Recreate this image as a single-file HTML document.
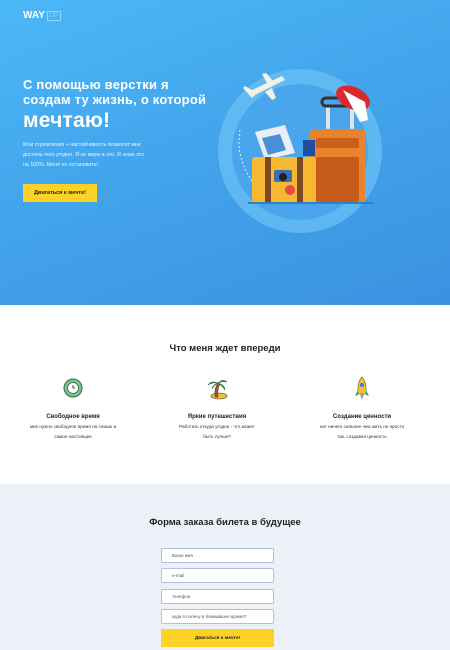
<!DOCTYPE html>
<html><head><meta charset="utf-8"><style>
*{margin:0;padding:0;box-sizing:border-box}
body{width:450px;height:650px;overflow:hidden;font-family:"Liberation Sans","DejaVu Sans",sans-serif;background:#fff;position:relative}
.hero{position:absolute;left:0;top:0;width:450px;height:305px;background:linear-gradient(160deg,#4bb8f7 0%,#42a3ea 50%,#3a92e0 100%)}
.logo{position:absolute;left:23px;top:10px;color:#fff;font-weight:bold;font-size:10px}
.logo span{display:inline-block;border:1px solid #9bd3fa;color:#9bd3fa;font-size:6px;padding:1px 2px;margin-left:2px;vertical-align:1px;font-weight:normal}
h1{position:absolute;left:23px;top:77px;color:#fff;font-size:13px;line-height:15px;font-weight:bold;white-space:nowrap;letter-spacing:.2px}
h1 b{font-size:21px;line-height:28px}
.p{position:absolute;left:23px;top:140px;color:#e8f5ff;font-size:5.3px;line-height:10px;white-space:nowrap}
.btn{position:absolute;background:#fdd226;color:#222;font-weight:bold;font-size:5.5px;display:flex;align-items:center;justify-content:center}
.circle{position:absolute;left:218px;top:69px;width:164px;height:164px;border-radius:50%;background:#6ac0f4;opacity:.75}
.circle2{position:absolute;left:232px;top:84px;width:136px;height:136px;border-radius:50%;background:#4aa6ec}
h2{position:absolute;width:450px;text-align:center;font-size:9.5px;color:#222;font-weight:bold}
.col{position:absolute;width:140px;text-align:center;top:412px;font-size:4.6px;line-height:10px;color:#333;white-space:nowrap}
.col b{display:block;font-size:6px;color:#222}
.s3{position:absolute;left:0;top:484px;width:450px;height:166px;background:#ebf1f7}
.in{position:absolute;left:161px;width:113px;height:15px;background:#fff;border:1px solid #b8bdd6;border-radius:2px;font-size:4.5px;color:#555;padding-left:10px;line-height:13px}
</style></head><body>
<div class="hero">
<div class="logo">WAY<span>UP</span></div>
<h1>С помощью верстки я<br>создам ту жизнь, о которой<br><b>мечтаю!</b></h1>
<div class="p">Мои стремления + настойчивость позволят мне<br>достичь чего угодно. Я не верю в это. Я знаю это<br>на 100%. Меня не остановить!</div>
<div class="btn" style="left:23px;top:184px;width:74px;height:18px">Двигаться к мечте!</div>
<div class="circle"></div><div class="circle2"></div>
<svg style="position:absolute;left:210px;top:60px" width="180" height="180" viewBox="0 0 180 180">
<path d="M30 70 Q25 100 45 125" stroke="#fff" stroke-dasharray="2 2" fill="none" stroke-width=".8"/>
<path d="M45 35 L75 20 L72 16 L42 30 L35 26 L33 28 L42 38 Z" fill="#f3f0e4"/>
<path d="M58 25 L52 14 L56 13 L64 22 Z M55 32 L62 40 L66 38 L62 28Z" fill="#f3f0e4"/>
<rect x="116" y="45" width="4" height="26" fill="#dfe4ea"/><rect x="140" y="45" width="4" height="26" fill="#dfe4ea"/>
<rect x="112" y="38" width="34" height="8" rx="4" fill="none" stroke="#333" stroke-width="3"/>
<rect x="100" y="69" width="55" height="75" rx="4" fill="#e8832e"/>
<rect x="106" y="78" width="43" height="10" rx="2" fill="#c9601e"/>
<rect x="106" y="97" width="43" height="45" rx="2" fill="#c55c1a"/>
<ellipse cx="143" cy="38" rx="18" ry="11" fill="#d92b2b" transform="rotate(25 143 38)"/>
<path d="M133 30 L155 42 L158 60 L150 62 Z" fill="#fff"/>
<path d="M45 72 L75 65 L85 93 L55 100 Z" fill="#e9eef5"/><path d="M52 78 L70 74 L76 90 L58 95Z" fill="#4a90d9"/>
<rect x="93" y="80" width="12" height="16" fill="#1f4f9c"/>
<rect x="42" y="97" width="64" height="46" rx="3" fill="#f6b733"/>
<rect x="55" y="97" width="6" height="46" fill="#7b4a25"/><rect x="87" y="97" width="6" height="46" fill="#7b4a25"/>
<rect x="64" y="110" width="18" height="12" rx="2" fill="#3b6fb3"/><circle cx="73" cy="117" r="4" fill="#222"/>
<circle cx="80" cy="130" r="5" fill="#e54b4b"/>
<rect x="38" y="142" width="125" height="2" fill="#2f7fcc"/>
</svg>
</div>
<h2 style="top:343px">Что меня ждет впереди</h2>
<svg style="position:absolute;left:61px;top:376px" width="24" height="24" viewBox="0 0 24 24"><circle cx="12" cy="12" r="9" fill="#7cc48f" stroke="#2f6b44" stroke-width="1"/><circle cx="12" cy="12" r="5.5" fill="#fff" stroke="#2f6b44" stroke-width=".8"/><path d="M12 9v3h2" stroke="#222" fill="none" stroke-width=".8"/></svg>
<svg style="position:absolute;left:205px;top:376px" width="24" height="24" viewBox="0 0 24 24"><ellipse cx="14" cy="20" rx="8" ry="3" fill="#f5c033" stroke="#333" stroke-width=".6"/><path d="M10 21 Q9 12 13 7 L15 8 Q12 13 13 21Z" fill="#a8581f" stroke="#333" stroke-width=".5"/><path d="M13 7 Q6 4 3 9 Q8 6 13 7 Q18 2 22 6 Q17 5 13 7 Q20 9 20 14 Q16 9 13 7 Q9 9 7 13 Q8 8 13 7Z" fill="#3aa15a" stroke="#1e5a32" stroke-width=".5"/></svg>
<svg style="position:absolute;left:353px;top:376px" width="18" height="26" viewBox="0 0 18 26"><path d="M9 1 Q14 6 13 18 L5 18 Q4 6 9 1Z" fill="#f2c230" stroke="#555" stroke-width=".6"/><circle cx="9" cy="9" r="2" fill="#3a7fcc"/><path d="M5 14 L2 20 L5 19Z M13 14 L16 20 L13 19Z" fill="#3aa15a"/><path d="M7 18 L9 24 L11 18Z" fill="#999"/></svg>
<div class="col" style="left:3px"><b>Свободное время</b>мне нужно свободное время на семью и<br>самое настоящее</div>
<div class="col" style="left:147px"><b>Яркие путешествия</b>Работать откуда угодно - что может<br>быть лучше?</div>
<div class="col" style="left:292px"><b>Создание ценности</b>нет ничего сильнее чем жить не просто<br>так, создавая ценность</div>
<div class="s3"></div>
<h2 style="top:517px">Форма заказа билета в будущее</h2>
<div class="in" style="top:548px">Ваше имя</div>
<div class="in" style="top:568px">e-mail</div>
<div class="in" style="top:589px">телефон</div>
<div class="in" style="top:609px">куда я полечу в ближайшее время?</div>
<div class="btn" style="left:161px;top:629px;width:113px;height:18px;font-size:4.8px">Двигаться к мечте!</div>
</body></html>
